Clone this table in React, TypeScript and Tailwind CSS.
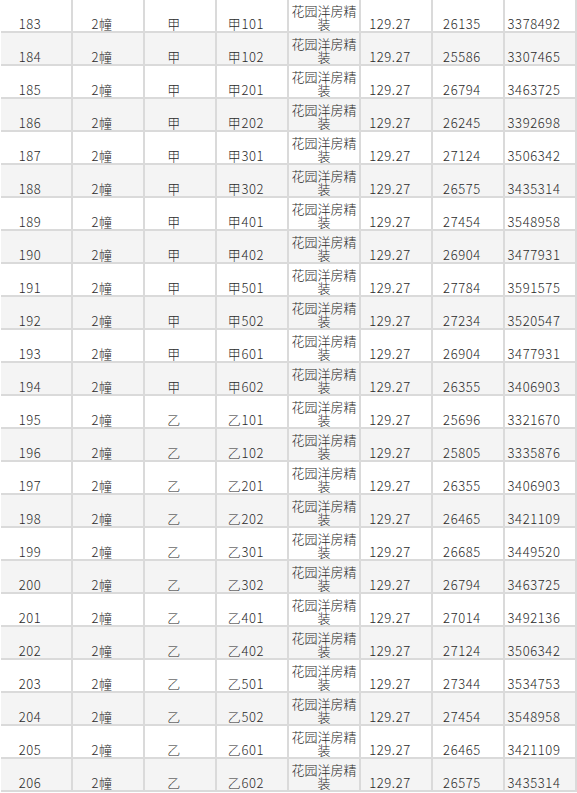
import React from 'react';

type Row = [number, string, string, string];

// id, room, unit price, total
const rows: Row[] = [
  [183, '甲101', '26135', '3378492'],
  [184, '甲102', '25586', '3307465'],
  [185, '甲201', '26794', '3463725'],
  [186, '甲202', '26245', '3392698'],
  [187, '甲301', '27124', '3506342'],
  [188, '甲302', '26575', '3435314'],
  [189, '甲401', '27454', '3548958'],
  [190, '甲402', '26904', '3477931'],
  [191, '甲501', '27784', '3591575'],
  [192, '甲502', '27234', '3520547'],
  [193, '甲601', '26904', '3477931'],
  [194, '甲602', '26355', '3406903'],
  [195, '乙101', '25696', '3321670'],
  [196, '乙102', '25805', '3335876'],
  [197, '乙201', '26355', '3406903'],
  [198, '乙202', '26465', '3421109'],
  [199, '乙301', '26685', '3449520'],
  [200, '乙302', '26794', '3463725'],
  [201, '乙401', '27014', '3492136'],
  [202, '乙402', '27124', '3506342'],
  [203, '乙501', '27344', '3534753'],
  [204, '乙502', '27454', '3548958'],
  [205, '乙601', '26465', '3421109'],
  [206, '乙602', '26575', '3435314'],
];

const Cell = ({ children, wrap }: { children: React.ReactNode; wrap?: boolean }) => (
  <div
    className={`w-[72px] h-[33px] shrink-0 border-r-2 border-b-2 border-[#dadada] flex items-end justify-center text-center pb-[1px] ${
      wrap ? '' : 'pr-3 tracking-[0.6px]'
    }`}
  >
    <span className="block w-full">{children}</span>
  </div>
);

export default function App() {
  return (
    <div
      className="w-[577px] h-[793px] bg-white overflow-hidden text-[13px] leading-[13px] font-light text-[#2a2a2a]"
      style={{ fontFamily: '"Noto Sans CJK SC", "Noto Sans", sans-serif' }}
    >
      <div className="ml-[1px] flex flex-col">
        {rows.map(([id, room, price, total]) => (
          <div key={id} className={`flex ${id % 2 === 0 ? 'bg-[#f4f4f4]' : 'bg-white'}`}>
            <Cell>{id}</Cell>
            <Cell>2幢</Cell>
            <Cell>{room.charAt(0)}</Cell>
            <Cell>{room}</Cell>
            <Cell wrap>花园洋房精装</Cell>
            <Cell>129.27</Cell>
            <Cell>{price}</Cell>
            <Cell>{total}</Cell>
          </div>
        ))}
      </div>
    </div>
  );
}
